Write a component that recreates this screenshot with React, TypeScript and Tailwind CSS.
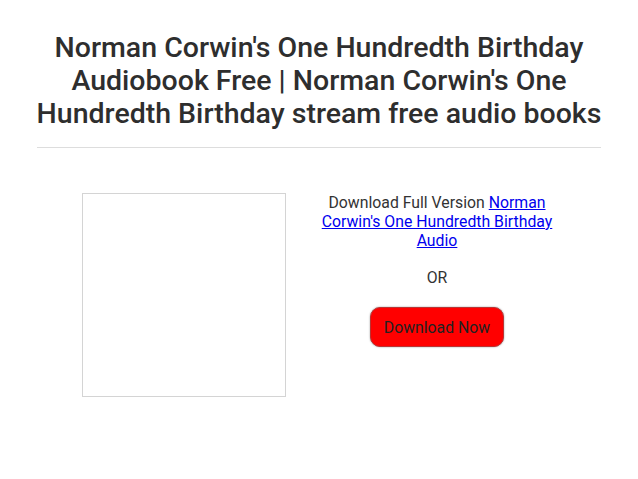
export default function App() {
  return (
    <div className="min-h-[479px] w-[638px] bg-white font-['Roboto',sans-serif] text-[#2e2e2e]">
      <div className="px-[30px] pt-[31px]">
        <h1 className="text-center text-[28.5px] font-medium leading-[33px]">
          Norman Corwin's One Hundredth Birthday Audiobook Free | Norman Corwin's One Hundredth Birthday stream free audio books
        </h1>
        <div className="mx-[7px] mt-[17px] h-px bg-[#ddd]" />

        <div className="mt-[45px] flex items-start pl-[52px]">
          <div className="h-[204px] w-[204px] border border-[#d4d4d4] bg-white" />

          <div className="ml-[26px] flex w-[250px] flex-col items-center text-center text-[15.8px] leading-[19px] text-[#333]">
            <p>
              Download Full Version{" "}
              <a href="#" className="text-[#0000ee] underline">
                Norman Corwin's One Hundredth Birthday Audio
              </a>
            </p>
            <p className="mt-[18px]">OR</p>
            <button className="mt-[20px] h-[40px] w-[134px] rounded-[10px] border border-[#b33] bg-[#ff0000] text-[15.8px] text-[#222] shadow-[0_0_2px_rgba(0,0,0,0.4)]">
              Download Now
            </button>
          </div>
        </div>
      </div>
    </div>
  );
}
